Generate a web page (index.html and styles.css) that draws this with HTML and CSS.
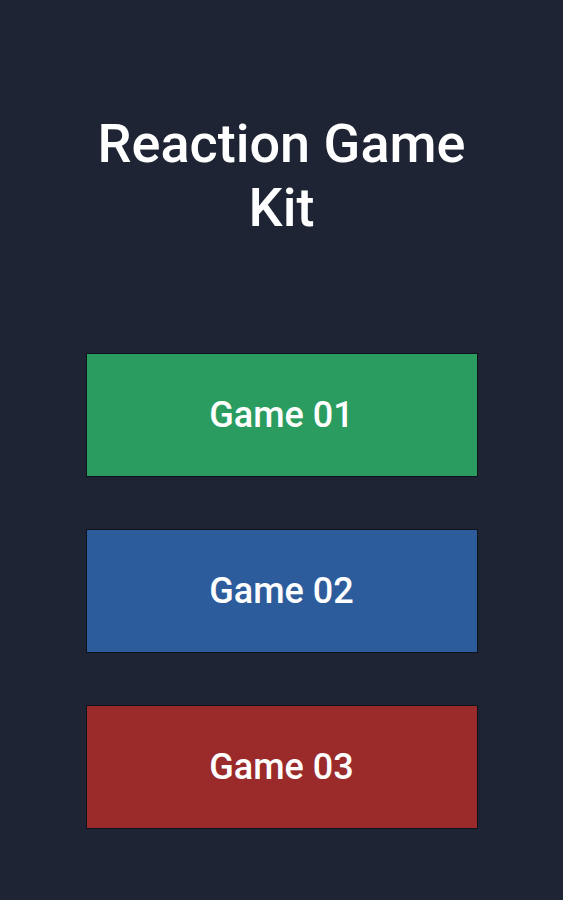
FILE: index.html
```html
<!DOCTYPE html>
<html>
<head>
<meta charset="utf-8">
<link rel="stylesheet" href="styles.css">
</head>
<body>
<main class="screen">
  <h1 class="title">Reaction Game<br>Kit</h1>
  <nav class="menu">
    <button class="game-btn green">Game 01</button>
    <button class="game-btn blue">Game 02</button>
    <button class="game-btn red">Game 03</button>
  </nav>
</main>
</body>
</html>
```
FILE: styles.css
```css
html, body {
  margin: 0;
  padding: 0;
  background: #1f2435;
}
.screen {
  width: 563px;
  height: 900px;
  display: flex;
  flex-direction: column;
  align-items: center;
  font-family: Roboto, "Liberation Sans", sans-serif;
  color: #ffffff;
}
.title {
  margin: 112px 0 0 0;
  font-size: 54px;
  line-height: 64px;
  font-weight: 500;
  text-align: center;
}
.menu {
  margin-top: 113px;
  display: flex;
  flex-direction: column;
  gap: 52px;
}
.game-btn {
  width: 392px;
  height: 124px;
  border: 1px solid #0e121b;
  font-family: Roboto, "Liberation Sans", sans-serif;
  font-weight: 500;
  font-size: 36px;
  color: #ffffff;
  cursor: pointer;
  padding: 0;
}
.green { background: #2a9c5f; }
.blue { background: #2d5c9c; }
.red { background: #9b2b2b; }
```
